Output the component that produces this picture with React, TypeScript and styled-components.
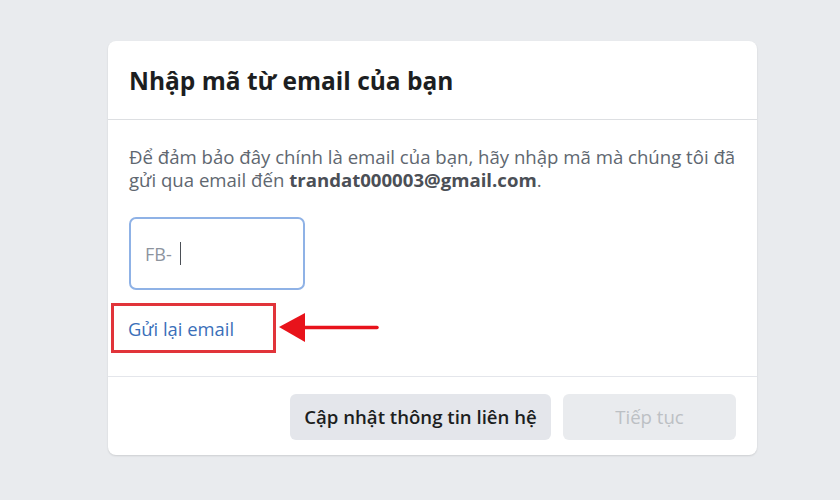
import React from "react";
import styled, { createGlobalStyle } from "styled-components";

const GlobalStyle = createGlobalStyle`
  html, body {
    margin: 0;
    padding: 0;
    background: #e9ebee;
    font-family: "Open Sans", "Liberation Sans", sans-serif;
  }
`;

const Page = styled.div`
  width: 840px;
  height: 500px;
  box-sizing: border-box;
  padding-top: 41px;
  padding-left: 108px;
  overflow: hidden;
`;

const Card = styled.div`
  width: 649px;
  background: #ffffff;
  border-radius: 8px;
  box-shadow: 0 1px 2px rgba(0, 0, 0, 0.12);
`;

const Header = styled.div`
  height: 79px;
  box-sizing: border-box;
  padding: 0 21px;
  display: flex;
  align-items: center;
  border-bottom: 1px solid #dddfe2;
`;

const Title = styled.h2`
  margin: 0;
  font-size: 24.5px;
  font-weight: 700;
  color: #1c1e21;
`;

const Body = styled.div`
  padding: 25px 21px 23px;
  display: flex;
  flex-direction: column;
  align-items: flex-start;
  border-bottom: 1px solid #e4e6eb;
`;

const Description = styled.p`
  margin: 0;
  width: 615px;
  font-size: 18.6px;
  line-height: 23px;
  color: #606770;

  b {
    color: #4b4f56;
    font-weight: 700;
  }
`;

const CodeBox = styled.div`
  margin-top: 26px;
  width: 176px;
  height: 73px;
  box-sizing: border-box;
  border: 2px solid #8fb2e6;
  border-radius: 7px;
  display: flex;
  align-items: center;
  padding-left: 14px;
  gap: 8px;
  font-size: 18px;
  color: #8d949e;
`;

const Caret = styled.span`
  width: 1.5px;
  height: 23px;
  background: #4b4f56;
`;

const ResendRow = styled.div`
  margin-top: 13px;
  margin-left: -18px;
  display: flex;
  align-items: center;
`;

const Highlight = styled.div`
  width: 165px;
  height: 50px;
  box-sizing: border-box;
  border: 3.5px solid #e1343a;
  display: flex;
  align-items: center;
  padding-left: 14px;
`;

const Link = styled.a`
  font-size: 18.4px;
  color: #3a6fb9;
  text-decoration: none;
  cursor: pointer;
`;

const Arrow = styled.svg`
  margin-left: 3px;
  display: block;
`;

const Footer = styled.div`
  height: 78px;
  box-sizing: border-box;
  padding: 1px 21px 0;
  display: flex;
  align-items: center;
  justify-content: flex-end;
  gap: 12px;
`;

const Button = styled.button<{ $disabled?: boolean }>`
  height: 46px;
  width: ${(p) => (p.$disabled ? "173px" : "261px")};
  padding: 0;
  border: none;
  border-radius: 6px;
  background: ${(p) => (p.$disabled ? "#e9ebee" : "#e4e6eb")};
  color: ${(p) => (p.$disabled ? "#bcc0c4" : "#1c1e21")};
  font-family: inherit;
  font-size: 18.6px;
  font-weight: ${(p) => (p.$disabled ? 400 : 600)};
  cursor: ${(p) => (p.$disabled ? "default" : "pointer")};
`;

export default function App() {
  return (
    <>
      <GlobalStyle />
      <Page>
        <Card>
          <Header>
            <Title>Nhập mã từ email của bạn</Title>
          </Header>
          <Body>
            <Description>
              Để đảm bảo đây chính là email của bạn, hãy nhập mã mà chúng tôi đã gửi qua email đến{" "}
              <b>trandat000003@gmail.com</b>.
            </Description>
            <CodeBox>
              FB-
              <Caret />
            </CodeBox>
            <ResendRow>
              <Highlight>
                <Link>Gửi lại email</Link>
              </Highlight>
              <Arrow width="100" height="32" viewBox="0 0 100 32">
                <polygon points="0,15 26,1 26,30" fill="#e8131b" />
                <line x1="24" y1="15.5" x2="98" y2="15.5" stroke="#e8131b" strokeWidth="3.5" strokeLinecap="round" />
              </Arrow>
            </ResendRow>
          </Body>
          <Footer>
            <Button>Cập nhật thông tin liên hệ</Button>
            <Button $disabled>Tiếp tục</Button>
          </Footer>
        </Card>
      </Page>
    </>
  );
}
